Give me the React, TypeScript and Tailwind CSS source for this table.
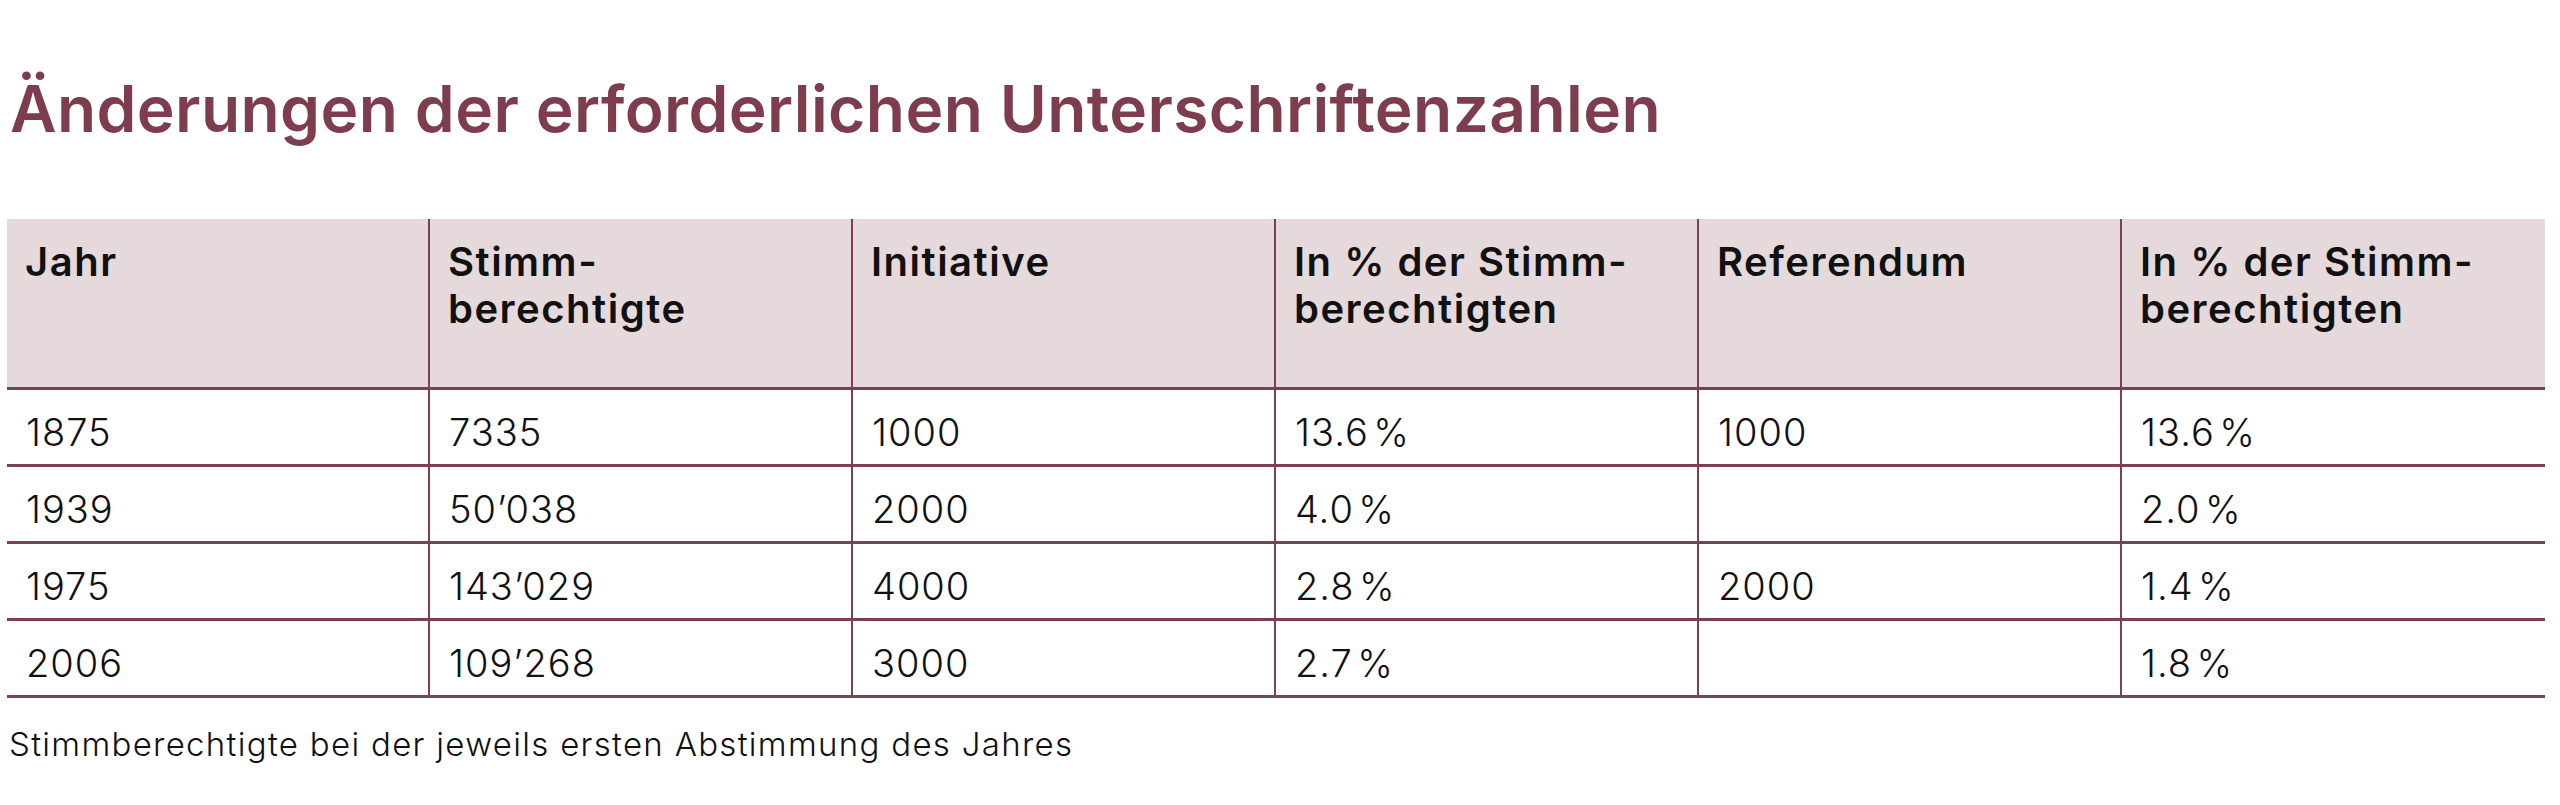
const header = [
  ["Jahr"],
  ["Stimm-", "berechtigte"],
  ["Initiative"],
  ["In % der Stimm-", "berechtigten"],
  ["Referendum"],
  ["In % der Stimm-", "berechtigten"],
]

const rows = [
  ["1875", "7335", "1000", "13.6\u200A%", "1000", "13.6\u200A%"],
  ["1939", "50’038", "2000", "4.0\u200A%", "", "2.0\u200A%"],
  ["1975", "143’029", "4000", "2.8\u200A%", "2000", "1.4\u200A%"],
  ["2006", "109’268", "3000", "2.7\u200A%", "", "1.8\u200A%"],
]

export default function App() {
  return (
    <div className="min-h-[805px] bg-white pl-[7px] pr-[15px] pt-[77px] font-['Inter',sans-serif] text-[#111]">
      <h1 className="pl-[3px] text-[64px] font-semibold leading-none tracking-[0.4px] text-[#7d3d4d]">
        Änderungen der erforderlichen Unterschriftenzahlen
      </h1>

      <div className="mt-[78px] grid grid-cols-6">
        {header.map((lines, i) => (
          <div
            key={i}
            className={`h-[171px] border-b-[3px] border-[#7a4251] bg-[#e6d9dc] pl-[18px] pt-[19px] text-[40px] font-semibold leading-[47px] tracking-[1.5px] ${
              i < 5 ? "border-r-2" : ""
            }`}
          >
            {lines.map((l, j) => (
              <div key={j}>{l}</div>
            ))}
          </div>
        ))}
        {rows.map((row, r) =>
          row.map((cell, c) => (
            <div
              key={`${r}-${c}`}
              className={`h-[77px] border-b-[3px] border-[#7a4251] pl-[19px] pt-[19px] text-[38px] font-light leading-[46px] tracking-[1px] ${
                c < 5 ? "border-r-2" : ""
              }`}
            >
              {cell}
            </div>
          ))
        )}
      </div>

      <p className="mt-[22px] pl-[2px] text-[33px] font-light leading-[48px] tracking-[1.3px]">
        Stimmberechtigte bei der jeweils ersten Abstimmung des Jahres
      </p>
    </div>
  )
}
